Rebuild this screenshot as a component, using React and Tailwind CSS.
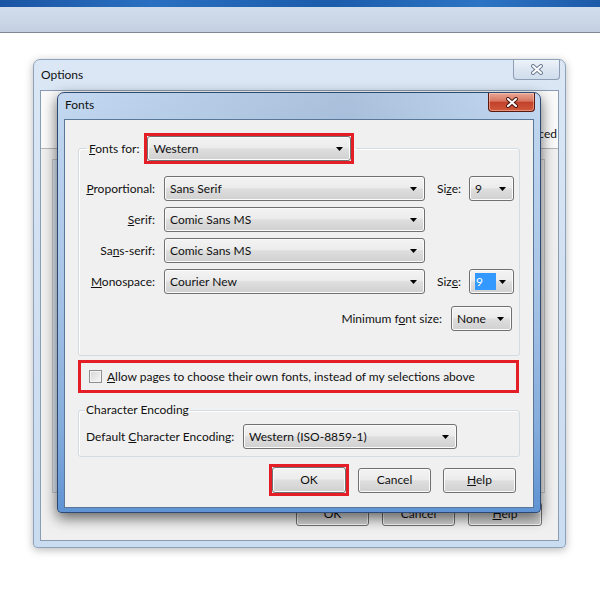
import React from 'react';

const btnBg =
  'bg-[linear-gradient(#f3f3f3,#ececec_45%,#dedede_52%,#d0d0d0)] border border-[#707070] rounded-[3px] shadow-[inset_0_0_0_1px_#fbfbfb]';

function Arrow() {
  return (
    <svg width="7" height="4" viewBox="0 0 7 4" className="shrink-0">
      <path d="M0 0h7L3.5 4z" fill="#000" />
    </svg>
  );
}

function Combo({ value, className = '', selected }) {
  return (
    <div className={`flex items-center h-[25px] pl-[5px] pr-[7px] ${btnBg} ${className}`}>
      {selected ? (
        <span className="flex-1 flex">
          <span className="bg-[#3399ff] text-white w-[21px] h-[17px] leading-[17px] pl-[1px]">{value}</span>
        </span>
      ) : (
        <span className="flex-1 truncate">{value}</span>
      )}
      <Arrow />
    </div>
  );
}

function Button({ children, className = '' }) {
  return (
    <div className={`flex items-center justify-center ${btnBg} ${className}`}>{children}</div>
  );
}

function CloseX({ dark, light }) {
  return (
    <svg width="12" height="11" viewBox="0 0 12 11">
      <path d="M2 2l8 7M10 2l-8 7" stroke={dark} strokeWidth="4" strokeLinecap="round" />
      <path d="M2 2l8 7M10 2l-8 7" stroke={light} strokeWidth="2" strokeLinecap="round" />
    </svg>
  );
}

function FontRow({ label, value, size, selected }) {
  return (
    <div className="flex items-center h-[25px]">
      <div className="w-[76px] text-right">{label}</div>
      <Combo value={value} className="ml-[9px] w-[261px]" />
      {size && (
        <>
          <div className="ml-[12px] w-[23px]">{size}</div>
          <Combo value="9" selected={selected} className="ml-[9px] w-[45px]" />
        </>
      )}
    </div>
  );
}

export default function App() {
  return (
    <div className="relative w-[600px] h-[600px] overflow-hidden bg-white text-[12px] leading-[16px] text-[#111] font-['Segoe_UI','Lato',sans-serif]">
      {/* browser chrome strip */}
      <div className="h-[7px] bg-[linear-gradient(90deg,#1a55a3,#2a6fc1_25%,#1b5cab_55%,#2d74c5_80%,#1c5aa8)]" />
      <div className="h-[26px] bg-[linear-gradient(#d2ddec,#c4d0e1)] border-b border-[#7e8892]" />

      {/* Options window (behind) */}
      <div className="absolute left-[33px] top-[59px] w-[533px] h-[489px] rounded-t-[7px] rounded-b-[4px] border border-[#8fa2bb] bg-[linear-gradient(#dbe7f5,#d2e1f2_40%,#cadcf0)] shadow-[0_2px_8px_rgba(0,0,0,0.28)] flex flex-col px-[6px] pb-[6px]">
        <div className="h-[30px] flex items-start">
          <span className="mt-[7px] pl-[1px]">Options</span>
          <div className="ml-auto mr-[-1px] w-[47px] h-[20px] flex items-center justify-center rounded-b-[4px] border border-t-0 border-[#8c9db4] bg-[linear-gradient(#eef3f9,#dce6f2_50%,#d0ddec)]">
            <CloseX dark="#6d7b92" light="#ffffff" />
          </div>
        </div>
        <div className="flex-1 border border-[#8a9cb2] bg-[#f0f0f0] flex flex-col">
          <div className="h-[58px] bg-[#fafafa] border-b border-[#b5b5b5] flex items-end justify-end pr-[1px] pb-[6px]">
            <span>Advanced</span>
          </div>
          <div className="flex-1 mx-[11px] mr-[13px] mt-[10px] border border-[#c6c6c6] bg-[linear-gradient(90deg,#dfe9f6,#f0f0f0_30%)]" />
          <div className="flex justify-end items-center pr-[16px] pt-[9px] pb-[14px]">
            <Button className="w-[73px] h-[24px]">OK</Button>
            <Button className="ml-[13px] w-[73px] h-[24px]">Cancel</Button>
            <Button className="ml-[13px] w-[74px] h-[24px]">
              <span><u>H</u>elp</span>
            </Button>
          </div>
        </div>
      </div>

      {/* Fonts dialog */}
      <div className="absolute left-[57px] top-[92px] w-[484px] h-[421px] rounded-t-[7px] rounded-b-[4px] border border-[#2d4a72] bg-[linear-gradient(#c3d8f0,#a9c5e7_45%,#84acdc_80%,#5f93d3)] shadow-[0_5px_14px_rgba(0,0,0,0.6)] flex flex-col px-[6px] pb-[4px]">
        <div className="h-[26px] flex items-start bg-[linear-gradient(90deg,rgba(255,255,255,0),rgba(60,90,130,0.12)_40%,rgba(60,90,130,0.18)_60%,rgba(255,255,255,0))]">
          <span className="mt-[4px] pl-[1px]">Fonts</span>
          <div className="ml-auto mr-[-1px] w-[47px] h-[19px] flex items-center justify-center rounded-b-[4px] border border-t-0 border-[#5a1810] bg-[linear-gradient(#e9a896,#d7755f_45%,#c2412b_52%,#cf5a3c)] shadow-[inset_0_0_0_1px_rgba(255,220,200,0.45)]">
            <CloseX dark="#4a1a14" light="#ffffff" />
          </div>
        </div>

        <div className="flex-1 border border-[#5b7797] bg-[#f0f0f0] flex flex-col">
          {/* Fonts for group */}
          <fieldset className="mt-[13px] ml-[13px] mr-[13px] border border-[#d3dbe2] rounded-[3px] shadow-[inset_1px_1px_0_#fff] pb-[24px]">
            <legend className="ml-[8px] px-[2px]">
              <div className="flex items-center">
                <span>
                  <u>F</u>onts for:
                </span>
                <div className="ml-[5px] border-[3px] border-[#e31e26]">
                  <Combo value="Western" className="w-[204px]" />
                </div>
              </div>
            </legend>
            <div className="mt-[12px] flex flex-col gap-[6px]">
              <FontRow label={<><u>P</u>roportional:</>} value="Sans Serif" size={<>Si<u>z</u>e:</>} />
              <FontRow label={<><u>S</u>erif:</>} value="Comic Sans MS" />
              <FontRow label={<>Sa<u>n</u>s-serif:</>} value="Comic Sans MS" />
              <FontRow label={<><u>M</u>onospace:</>} value="Courier New" size={<>Siz<u>e</u>:</>} selected />
            </div>
            <div className="mt-[12px] flex items-center justify-end pr-[7px] h-[25px]">
              <span>
                Minimum f<u>o</u>nt size:
              </span>
              <Combo value="None" className="ml-[9px] w-[61px]" />
            </div>
          </fieldset>

          {/* checkbox highlight */}
          <div className="mt-[4px] ml-[13px] mr-[14px] h-[33px] border-[3px] border-[#e31e26] flex items-center pl-[8px]">
            <div className="w-[13px] h-[13px] border border-[#8e8f8f] bg-[linear-gradient(135deg,#d6d6d6,#f7f7f7)] shadow-[inset_0_0_0_1px_#f4f4f4]" />
            <span className="ml-[5px]">
              <u>A</u>llow pages to choose their own fonts, instead of my selections above
            </span>
          </div>

          {/* Character Encoding */}
          <fieldset className="mt-[9px] ml-[13px] mr-[13px] border border-[#d3dbe2] rounded-[3px] shadow-[inset_1px_1px_0_#fff] pb-[7px]">
            <legend className="ml-[6px] px-[1px]">Character Encoding</legend>
            <div className="mt-[6px] pl-[7px] flex items-center">
              <span className="w-[157px]">
                Default <u>C</u>haracter Encoding:
              </span>
              <Combo value="Western (ISO-8859-1)" className="w-[214px]" />
            </div>
          </fieldset>

          {/* buttons */}
          <div className="mt-[7px] flex items-center justify-end pr-[17px]">
            <div className="border-[3px] border-[#e31e26]">
              <Button className="w-[74px] h-[26px] border-[#3c7fb1] shadow-[inset_0_0_0_1px_#6fd0f2]">OK</Button>
            </div>
            <Button className="ml-[9px] w-[73px] h-[25px]">Cancel</Button>
            <Button className="ml-[12px] w-[73px] h-[25px]">
              <span><u>H</u>elp</span>
            </Button>
          </div>
        </div>
      </div>
    </div>
  );
}
